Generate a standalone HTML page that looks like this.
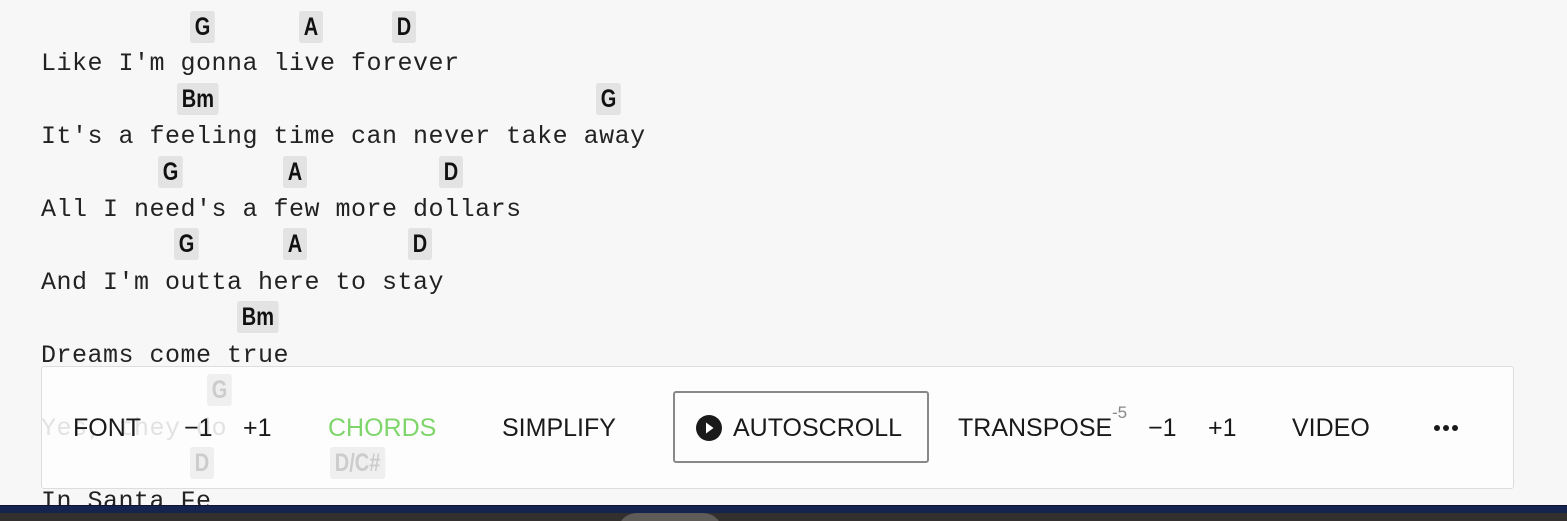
<!DOCTYPE html>
<html><head><meta charset="utf-8">
<style>
html,body{margin:0;padding:0;width:1567px;height:521px;overflow:hidden;background:#f7f7f7;position:relative}
.ly{position:absolute;left:41px;font-family:"Liberation Mono",monospace;font-size:25px;letter-spacing:0.5px;color:#222;line-height:30px;white-space:pre}
.ch{position:absolute;height:32px;line-height:32px;background:#e3e3e3;border-radius:3px;font-family:"Liberation Sans",sans-serif;font-weight:bold;font-size:25px;color:#111;text-align:center;padding:0 6px;transform:scaleX(0.8);transform-origin:left}
.fade{color:#ccc;background:#efefef}
.fl{color:#d8d8d8}
#bar{position:absolute;left:41px;top:366px;width:1471px;height:121px;background:#fdfdfd;border:1px solid #ddd;border-radius:3px}
.t{position:absolute;top:413px;font-family:"Liberation Sans",sans-serif;font-size:25px;line-height:30px;color:#1a1a1a;transform:scaleX(1);transform-origin:left}
#auto{position:absolute;left:673px;top:391px;width:252px;height:68px;border:2px solid #888;border-radius:3px}
</style></head><body>
<div class="ly" style="top:49px">Like I'm gonna live forever</div>
<div class="ly" style="top:122px">It's a feeling time can never take away</div>
<div class="ly" style="top:195px">All I need's a few more dollars</div>
<div class="ly" style="top:268px">And I'm outta here to stay</div>
<div class="ly" style="top:341px">Dreams come true</div>
<div class="ly fl" style="top:414px">Yes, they do</div>
<div class="ly" style="top:487px">In Santa Fe</div>

<div class="ch" style="left:190px;top:11px">G</div>
<div class="ch" style="left:299px;top:11px">A</div>
<div class="ch" style="left:392px;top:11px">D</div>
<div class="ch" style="left:177px;top:83px">Bm</div>
<div class="ch" style="left:596px;top:83px">G</div>
<div class="ch" style="left:158px;top:156px">G</div>
<div class="ch" style="left:283px;top:156px">A</div>
<div class="ch" style="left:439px;top:156px">D</div>
<div class="ch" style="left:174px;top:228px">G</div>
<div class="ch" style="left:283px;top:228px">A</div>
<div class="ch" style="left:408px;top:228px">D</div>
<div class="ch" style="left:237px;top:301px">Bm</div>

<div id="bar"></div>
<div class="ch fade" style="left:207px;top:374px">G</div>
<div class="ch fade" style="left:190px;top:447px">D</div>
<div class="ch fade" style="left:330px;top:447px">D/C#</div>
<div class="ly" style="top:414px;color:rgba(200,200,200,0.5)">Yes, they do</div>

<div class="t" style="left:73px">FONT</div>
<div class="t" style="left:184px">−1</div>
<div class="t" style="left:243px">+1</div>
<div class="t" style="left:328px;color:#7ed66b">CHORDS</div>
<div class="t" style="left:502px">SIMPLIFY</div>
<div id="auto"></div>
<svg style="position:absolute;left:695px;top:414px" width="28" height="28" viewBox="0 0 28 28"><circle cx="14" cy="14" r="13" fill="#1a1a1a"/><path d="M11 8.5 L18.5 14 L11 19.5 Z" fill="#fff"/></svg>
<div class="t" style="left:733px">AUTOSCROLL</div>
<div class="t" style="left:958px">TRANSPOSE</div>
<div style="position:absolute;left:1112px;top:403px;font-family:'Liberation Sans',sans-serif;font-size:17px;color:#888">-5</div>
<div class="t" style="left:1148px">−1</div>
<div class="t" style="left:1208px">+1</div>
<div class="t" style="left:1292px">VIDEO</div>
<svg style="position:absolute;left:1433px;top:423px" width="30" height="10"><circle cx="4" cy="5" r="3" fill="#1a1a1a"/><circle cx="13" cy="5" r="3" fill="#1a1a1a"/><circle cx="22" cy="5" r="3" fill="#1a1a1a"/></svg>

<div style="position:absolute;left:0;top:505px;width:1567px;height:8px;background:#14244f;border-top:1px solid #0d1530"></div>
<div style="position:absolute;left:0;top:513px;width:1567px;height:8px;background:#332f2e"></div>
<div style="position:absolute;left:617px;top:513px;width:106px;height:20px;background:#5f5b59;border-radius:30px 30px 0 0"></div>
</body></html>
